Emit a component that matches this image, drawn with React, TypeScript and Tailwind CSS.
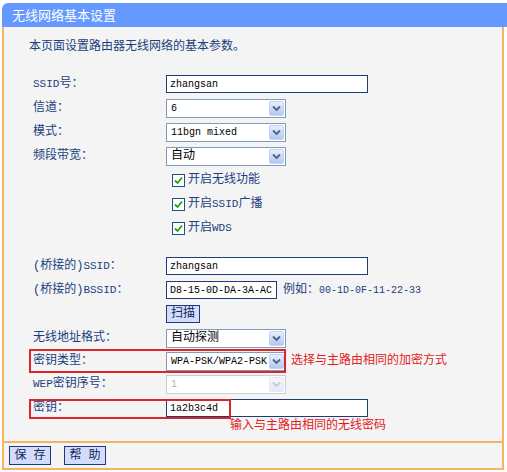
import type { ReactNode } from 'react';

const CJK = '"Noto Sans CJK SC", "Liberation Sans", sans-serif';
const MIX = '"Liberation Mono", "Noto Sans CJK SC", monospace';

function M({ children, big }: { children: ReactNode; big?: boolean }) {
  return (
    <span className={big ? 'text-[11px]' : 'text-[10px]'} style={{ fontFamily: '"Liberation Mono", monospace' }}>
      {children}
    </span>
  );
}

function Label({ children }: { children: ReactNode }) {
  return <div className="w-[137px] pl-[4px] text-[12px] text-[#1b3f7e] shrink-0">{children}</div>;
}

function TextBox({ value, width = 'w-[202px]' }: { value: string; width?: string }) {
  return (
    <div className={`${width} h-[18px] border border-[#1c3d7a] bg-white flex items-center pl-[3px] text-black`}>
      <M>{value}</M>
    </div>
  );
}

function Arrow({ disabled }: { disabled?: boolean }) {
  return (
    <div className="w-[17px] h-full p-[1px]">
      <div
        className={`w-full h-full rounded-[2px] border flex items-center justify-center ${
          disabled
            ? 'border-[#e2e8f4] bg-gradient-to-b from-[#f4f6fb] to-[#e3e9f5]'
            : 'border-[#c3d3fd] bg-gradient-to-b from-[#e8efff] to-[#b4c6ee]'
        }`}
      >
        <svg width="9" height="7" viewBox="0 0 9 7">
          <path
            d="M1 1.5 L4.5 5 L8 1.5"
            fill="none"
            stroke={disabled ? '#c4ccdc' : '#4d6185'}
            strokeWidth="1.8"
          />
        </svg>
      </div>
    </div>
  );
}

function Select({ value, mono, disabled }: { value: string; mono?: boolean; disabled?: boolean }) {
  return (
    <div
      className={`w-[120px] h-[19px] border bg-white flex items-stretch ${
        disabled ? 'border-[#c9d0d8]' : 'border-[#7f9db9]'
      }`}
    >
      <div
        className={`flex-1 flex items-center pl-[4px] overflow-hidden whitespace-nowrap ${
          disabled ? 'text-[#b0b0b0]' : 'text-black'
        } text-[12px]`}
      >
        {mono ? <M>{value}</M> : value}
      </div>
      <Arrow disabled={disabled} />
    </div>
  );
}

function Check({ children }: { children: ReactNode }) {
  return (
    <div className="flex items-center gap-[3px] ml-[6px] text-[12px] text-[#1b3f7e]">
      <div className="w-[13px] h-[13px] border border-[#1c5180] bg-white flex items-center justify-center">
        <svg width="9" height="9" viewBox="0 0 9 9">
          <path d="M1 4.5 L3.5 7 L8 1.5" fill="none" stroke="#21a121" strokeWidth="1.8" />
        </svg>
      </div>
      <span>{children}</span>
    </div>
  );
}

function Row({ h = 'h-[24px]', children }: { h?: string; children: ReactNode }) {
  return <div className={`${h} flex items-center relative`}>{children}</div>;
}

export default function App() {
  return (
    <div className="w-[507px] h-[472px] bg-white pt-[3px]" style={{ fontFamily: MIX }}>
      {/* Title bar */}
      <div
        className="ml-[2px] h-[24px] bg-[#6699ff] rounded-tl-[6px] flex items-center pl-[10px] text-white text-[13px]"
        style={{ fontFamily: CJK }}
      >
        无线网络基本设置
      </div>

      {/* Body */}
      <div className="ml-[2px] w-[502px] h-[416px] border-x-2 border-b-2 border-[#f4b463] bg-[#f4f4f4] pl-[25px] pt-[13px]">
        <div className="h-[14px] leading-[14px] text-[12px] text-[#1b3f7e]">本页面设置路由器无线网络的基本参数。</div>

        <div className="mt-[18px]">
          <Row>
            <Label>
              <M big>SSID</M>号：
            </Label>
            <TextBox value="zhangsan" />
          </Row>
          <Row>
            <Label>信道：</Label>
            <Select value="6" mono />
          </Row>
          <Row>
            <Label>模式：</Label>
            <Select value="11bgn mixed" mono />
          </Row>
          <Row>
            <Label>频段带宽：</Label>
            <Select value="自动" />
          </Row>
          <Row>
            <Label>{''}</Label>
            <Check>开启无线功能</Check>
          </Row>
          <Row>
            <Label>{''}</Label>
            <Check>
              开启<M big>SSID</M>广播
            </Check>
          </Row>
          <Row>
            <Label>{''}</Label>
            <Check>
              开启<M big>WDS</M>
            </Check>
          </Row>

          <div className="h-[14px]" />

          <Row>
            <Label>
              (桥接的)<M big>SSID</M>：
            </Label>
            <TextBox value="zhangsan" />
          </Row>
          <Row>
            <Label>
              (桥接的)<M big>BSSID</M>：
            </Label>
            <TextBox value="D8-15-0D-DA-3A-AC" width="w-[111px]" />
            <span className="ml-[6px] text-[12px] text-[#1b3f7e]">
              例如：<M>00-1D-0F-11-22-33</M>
            </span>
          </Row>
          <Row>
            <Label>{''}</Label>
            <button className="w-[34px] h-[18px] border border-[#1c3d7a] bg-[#d5dcfb] text-[12px] text-[#102a5c] leading-none">
              扫描
            </button>
          </Row>
          <Row>
            <Label>无线地址格式：</Label>
            <Select value="自动探测" />
          </Row>
          <Row h="h-[22px]">
            <Label>密钥类型：</Label>
            <Select value="WPA-PSK/WPA2-PSK" mono />
            <span className="ml-[5px] text-[12px] text-[#e31b1b]">选择与主路由相同的加密方式</span>
            <div className="absolute left-0 top-[-1px] w-[257px] h-[24px] border-2 border-[#d9262b] pointer-events-none" />
          </Row>
          <Row>
            <Label>
              <M big>WEP</M>密钥序号：
            </Label>
            <Select value="1" mono disabled />
          </Row>
          <Row>
            <Label>密钥：</Label>
            <TextBox value="1a2b3c4d" />
            <div className="absolute left-0 top-[3px] w-[202px] h-[20px] border-2 border-[#d9262b] pointer-events-none" />
          </Row>
          <div className="h-[12px] leading-[12px] pl-[201px] text-[12px] text-[#e31b1b]">输入与主路由相同的无线密码</div>
        </div>
      </div>

      {/* Footer buttons */}
      <div className="ml-[2px] w-[502px] h-[27px] border-x-2 border-b-2 border-[#f4b463] bg-[#f4f4f4] flex items-center gap-[13px] pl-[5px]">
        <button className="w-[42px] h-[19px] border border-[#1c3d7a] bg-[#d5dcfb] text-[12px] text-[#102a5c] leading-none">
          保 存
        </button>
        <button className="w-[42px] h-[19px] border border-[#1c3d7a] bg-[#d5dcfb] text-[12px] text-[#102a5c] leading-none">
          帮 助
        </button>
      </div>
    </div>
  );
}
